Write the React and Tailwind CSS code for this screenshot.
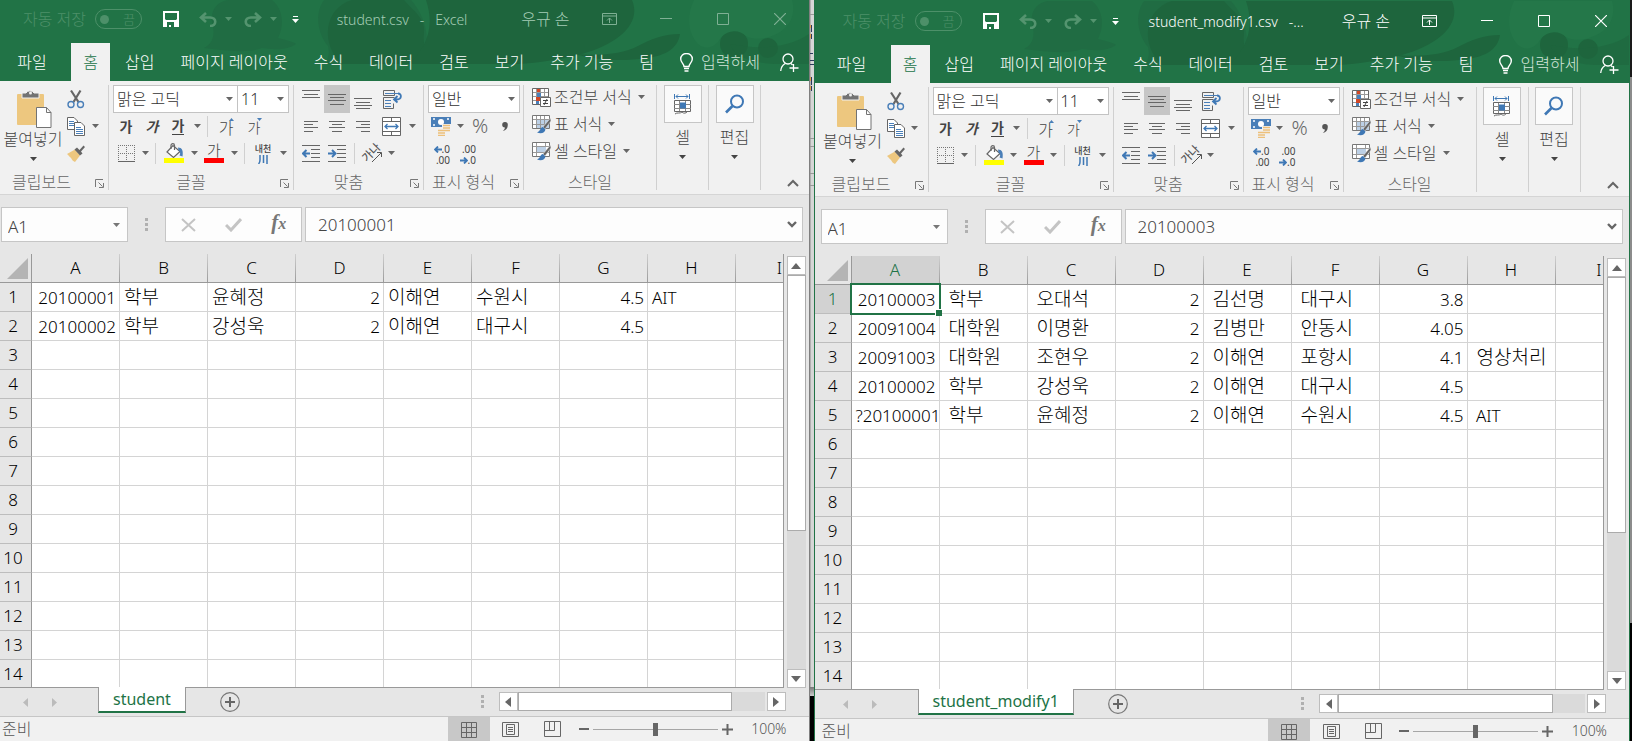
import React from "react";

const LEFT = {
  id: "left",
  title: "student.csv   -   Excel",
  active: false,
  cell: "20100001",
  sheet: "student",
  rows: [
    ["20100001", "학부", "윤혜정", "2", "이해연", "수원시", "4.5", "AIT"],
    ["20100002", "학부", "강성욱", "2", "이해연", "대구시", "4.5", ""],
  ],
};

const RIGHT = {
  id: "right",
  title: "student_modify1.csv   -...",
  active: true,
  cell: "20100003",
  sheet: "student_modify1",
  rows: [
    ["20100003", " 학부", " 오대석", "2", " 김선명", " 대구시", "3.8", ""],
    ["20091004", " 대학원", " 이명환", "2", " 김병만", " 안동시", "4.05", ""],
    ["20091003", " 대학원", " 조현우", "2", " 이해연", " 포항시", "4.1", " 영상처리"],
    ["20100002", " 학부", " 강성욱", "2", " 이해연", " 대구시", "4.5", ""],
    ["?20100001", " 학부", " 윤혜정", "2", " 이해연", " 수원시", "4.5", " AIT"],
  ],
};

const COLUMNS = ["A", "B", "C", "D", "E", "F", "G", "H", "I"];
const TABS = ["삽입", "페이지 레이아웃", "수식", "데이터", "검토", "보기", "추가 기능", "팀"];

/* ---------- small shared pieces ---------- */

function Caret({ className = "text-[#666]" }) {
  return (
    <svg width="7" height="4" viewBox="0 0 7 4" className={"shrink-0 " + className} aria-hidden="true">
      <path d="M0 0h7L3.5 4z" fill="currentColor" />
    </svg>
  );
}

function CaretButton({ label }) {
  return (
    <button aria-label={label} className="flex h-full w-3 items-center justify-center">
      <Caret />
    </button>
  );
}

function Btn({ label, w = "w-[26px]", className = "", children }) {
  return (
    <button aria-label={label} className={"flex h-full shrink-0 items-center justify-center " + w + " " + className}>
      {children}
    </button>
  );
}

function Sep() {
  return <span className="mx-1 h-[21px] w-px shrink-0 bg-[#d0d0d0]" />;
}

function Svg({ w, h, children, className = "" }) {
  return (
    <svg width={w} height={h} viewBox={`0 0 ${w} ${h}`} fill="none" className={"shrink-0 " + className} aria-hidden="true">
      {children}
    </svg>
  );
}

function Lines({ rows, w = 18, h = 27 }) {
  return (
    <Svg w={w} h={h}>
      {rows.map(([y, x1, x2]) => (
        <path key={y} d={`M${x1} ${y + 0.5}H${x2}`} stroke="#666" />
      ))}
    </Svg>
  );
}

/* ---------- header ---------- */

function HeaderArt() {
  return (
    <svg className="absolute right-0 top-0 h-16 w-[645px]" viewBox="0 0 645 64" preserveAspectRatio="xMaxYMin slice" aria-hidden="true">
      <g fill="#206c43">
        <path d="M40 48c12-6 10-18 8-26C46 8 56 0 66 0h42c12 10 12 26 6 38 8 2 16 4 18 6-8 6-22 6-34 4-16 6-40 2-58 0z" />
        <path d="M160 0c-10 14-6 34 4 46 2 8 0 14-4 18h95c14-18 8-46-8-64z" />
      </g>
      <g fill="#1e653d">
        <path d="M188 0c-28 8-32 44-10 64h100c-14-4-20-16-18-32C262 18 246 8 240 0z" />
        <path d="M262 0h206c10 24-14 44-50 54-44 12-96 12-122 10h-50c14-16 26-34 16-64z" />
        <path d="M410 54c28 2 48 0 64-8 12-6 24-12 42-12-2 14-14 22-34 24-24 4-50 2-72-4z" />
        <circle cx="570" cy="44" r="14" />
        <circle cx="604" cy="48" r="10" />
        <path d="M566 44c6 14 20 18 44 20h35V34c-20 14-50 16-79 10z" opacity="0.6" />
      </g>
      <path d="M530 0c-8 16-6 34 4 44 8 6 14 4 20-2 6-12 20-14 28-6 10 6 34 2 44-14 4-8 4-16 2-22z" fill="#247749" />
    </svg>
  );
}

function TitleBar({ win }) {
  const on = win.active ? "text-white" : "text-[#7fb094]";
  const name = win.active ? "text-white" : "text-[#a5cdb6]";
  return (
    <div className="relative mb-[5px] flex h-[38px] items-center pl-[28px] text-[16px]">
      <span className="w-[64px] shrink-0 whitespace-nowrap text-[#4d9069]">자동 저장</span>
      <button
        aria-label="자동 저장"
        className="ml-2 mr-[21px] flex h-5 w-[47px] shrink-0 items-center justify-between rounded-full border border-[#4d9069] pl-1 pr-1.5 text-[13px] leading-none text-[#4d9069]"
      >
        <span className="h-[9px] w-[9px] rounded-full bg-[#4d9069]" />끔
      </button>
      <button aria-label="저장" className="mr-5">
        <Svg w={16} h={16}>
          <path fillRule="evenodd" fill="#fff" d="M0 0h16v16H0zM2 2v6l1 1h10l1-1V2zM4 11v5h1v-0h1v-2h2v2h3v-5z" />
        </Svg>
      </button>
      <button aria-label="실행 취소" className="mr-2">
        <Svg w={18} h={15}>
          <path d="M7 1 2 5.500l5 4.500M2.500 5.500H11c7 0 7 8.500 0 8.500" stroke="#54946f" strokeWidth="2.600" />
        </Svg>
      </button>
      <Caret className="mr-3 text-[#54946f]" />
      <button aria-label="다시 실행" className="mr-2">
        <Svg w={18} h={15}>
          <path d="m11 1 5 4.500-5 4.500M15.500 5.500H7c-7 0-7 8.500 0 8.500" stroke="#54946f" strokeWidth="2.600" />
        </Svg>
      </button>
      <Caret className="mr-[15px] text-[#54946f]" />
      <button aria-label="빠른 실행 도구 모음 사용자 지정">
        <Svg w={7} h={7}>
          <path d="M1 .5h5" stroke="#fff" />
          <path d="M0 3h7L3.500 7z" fill="#fff" />
        </Svg>
      </button>
      <h1 className={"min-w-0 flex-1 whitespace-pre text-center text-[14px] " + (win.active ? "pr-2 " : "pr-4 ") + name}>{win.title}</h1>
      <span className={"mr-[11px] whitespace-nowrap " + name}>우규 손</span>
      <div className={"flex shrink-0 " + on}>
        <button aria-label="리본 메뉴 표시 옵션" className="flex w-[57px] justify-center">
          <Svg w={15} h={12}>
            <path d="M.5.5h14v11H.5zM.5 3h14M7.500 10V5M5 7.500 7.500 5 10 7.500" stroke="currentColor" />
          </Svg>
        </button>
        <button aria-label="최소화" className="flex w-[57px] items-center justify-center">
          <Svg w={12} h={12}>
            <path d="M0 5.500h12" stroke="currentColor" />
          </Svg>
        </button>
        <button aria-label="최대화" className="flex w-[57px] items-center justify-center">
          <Svg w={12} h={12}>
            <path d="M.5.5h11v11H.5z" stroke="currentColor" />
          </Svg>
        </button>
        <button aria-label="닫기" className="flex w-[57px] items-center justify-center">
          <Svg w={12} h={12}>
            <path d="m0 0 12 12M12 0 0 12" stroke="currentColor" strokeWidth="1.200" />
          </Svg>
        </button>
      </div>
    </div>
  );
}

function TabRow() {
  return (
    <nav className="relative flex h-[38px] items-stretch whitespace-nowrap text-[16px] text-white">
      <button className="w-[76px] shrink-0 pr-0.5">파일</button>
      <button className="mr-0.5 w-[39px] shrink-0 bg-[#f1f1f1] text-[#217346]">홈</button>
      {TABS.map((t) => (
        <button key={t} className="shrink-0 px-[13px]">
          {t}
        </button>
      ))}
      <button className="ml-[13px] flex items-center gap-2 text-[#d3e5da]">
        <Svg w={13} h={19}>
          <path
            d="M4 13.500c0-3-3.300-4-3.300-7.500a5.800 5.500 0 0 1 11.600 0c0 3.500-3.300 4.500-3.300 7.500zM4 15.500h5M4.500 18h4"
            stroke="#fff"
            strokeWidth="1.400"
          />
        </Svg>
        입력하세
      </button>
      <span className="flex-1" />
      <button aria-label="공유" className="mr-2.5">
        <Svg w={19} h={19}>
          <circle cx="8" cy="6" r="5" stroke="#fff" strokeWidth="1.300" />
          <path d="M.7 18c.3-4 2-6 4.500-7.500M11 10.500l1.500 1.500M13.500 11v8M9.500 15h9" stroke="#fff" strokeWidth="1.300" />
        </Svg>
      </button>
    </nav>
  );
}

/* ---------- ribbon ---------- */

function Group({ w, caption, launcher = true, children }) {
  return (
    <section className={"flex shrink-0 flex-col pt-1 " + w} aria-label={caption}>
      <div className="h-[84px]">{children}</div>
      <div className="flex h-[25px] items-center text-[16px] text-[#666]">
        <span className="flex-1 whitespace-nowrap text-center">{caption}</span>
        {launcher && (
          <button aria-label={caption + " 설정"} className="mr-1 mt-1 flex w-4 justify-end">
            <Svg w={9} h={9}>
              <path d="M.5 8V.5H8" stroke="#777" />
              <path d="m3.500 3.500 4 4M8.500 4v4.500H4" stroke="#777" />
            </Svg>
          </button>
        )}
      </div>
    </section>
  );
}

function GroupRule() {
  return <span className="mb-1 mt-1 w-px shrink-0 bg-[#d0d0d0]" />;
}

function Combo({ label, value, w, className = "" }) {
  return (
    <label className={"relative block h-7 border border-[#c3c3c3] bg-white " + w + " " + className}>
      <span className="sr-only">{label}</span>
      <select defaultValue={value} className="block h-full w-full appearance-none bg-transparent pl-[3px] text-[16px] leading-[26px] text-[#333] outline-none">
        <option>{value}</option>
      </select>
      <span className="pointer-events-none absolute inset-y-0 right-1 flex items-center">
        <Caret />
      </span>
    </label>
  );
}

function Clipboard() {
  return (
    <Group w="w-[113px]" caption="클립보드">
      <div className="flex">
        <button className="flex w-[68px] shrink-0 flex-col items-center pl-2 text-[16px] leading-5 text-[#444]">
          <Svg w={36} h={40} className="ml-0.5 mt-1">
            <rect x="1" y="5" width="27" height="31" rx="1" fill="#edc77f" />
            <path d="M6 9V4h4a4.500 4 0 0 1 8 0h5v5z" fill="#737373" stroke="#f1f1f1" />
            <circle cx="14.500" cy="4" r="1.500" fill="#f1f1f1" />
            <path d="M20.500 18.500h10l4.500 5v15h-14.500z" fill="#fff" stroke="#737373" />
            <path d="M30.500 18.500v5h4.500" stroke="#737373" />
          </Svg>
          <span className="whitespace-nowrap">붙여넣기</span>
          <Caret className="mt-2" />
        </button>
        <div className="flex flex-col">
          <div className="flex h-7 items-center">
            <Btn label="잘라내기">
              <Svg w={18} h={20}>
                <path d="M4 1.500 11.500 13M13.500 1.500 6.500 13" stroke="#666" strokeWidth="2.200" />
                <circle cx="4" cy="15.500" r="3" stroke="#4a7fb8" strokeWidth="1.400" />
                <circle cx="13.500" cy="15.500" r="3" stroke="#4a7fb8" strokeWidth="1.400" />
              </Svg>
            </Btn>
          </div>
          <div className="flex h-[26px] items-center">
            <Btn label="복사">
              <Svg w={18} h={19}>
                <path d="M.5.5H7L10.500 4v8.500H.5z" fill="#fff" stroke="#666" />
                <path d="M2 4.500h5M2 6.500h5M2 8.500h5" stroke="#4a7fb8" />
                <path d="M7.500 5.500H14L17.500 9v9.500h-10z" fill="#fff" stroke="#666" />
                <path d="M9 10.500h5M9 12.500h7M9 14.500h7M9 16.500h7" stroke="#4a7fb8" />
              </Svg>
            </Btn>
            <CaretButton label="복사 옵션" />
          </div>
          <div className="flex h-7 items-center">
            <Btn label="서식 복사">
              <Svg w={18} h={17}>
                <path d="m0 9 8-4.500 5 6L8 17c-2-1-3-2-4-4-1-1-2-2-4-4z" fill="#edc77f" />
                <path d="m7.500 4.500 2.500-2 2.500 2.500L16.500.5 18 2l-4 4.500 1.500 2-2.500 2z" fill="#666" />
              </Svg>
            </Btn>
          </div>
        </div>
      </div>
    </Group>
  );
}

function FontGroup() {
  return (
    <Group w="w-[184px]" caption="글꼴">
      <div className="flex pl-1">
        <Combo label="글꼴" value="맑은 고딕" w="w-[125px]" />
        <Combo label="글꼴 크기" value="11" w="w-[52px]" className="-ml-px" />
      </div>
      <div className="flex h-[26px] items-center pl-1 text-[#444]">
        <Btn label="굵게" className="text-[14px] font-bold">가</Btn>
        <Btn label="기울임꼴" className="text-[14px] font-bold italic">가</Btn>
        <Btn label="밑줄" className="text-[14px] font-bold"><span className="border-b border-[#444] leading-4">가</span></Btn>
        <CaretButton label="밑줄 종류" />
        <Sep />
        <Btn label="글꼴 크기 크게" w="w-[28px]" className="relative pt-1 text-[16px] leading-5">
          가
          <Svg w={5} h={3} className="absolute right-1.5 top-[5px]"><path d="M0 3h5L2.500 0z" fill="#4a7fb8" /></Svg>
        </Btn>
        <Btn label="글꼴 크기 작게" w="w-[28px]" className="relative pt-1 text-[14px] leading-5">
          가
          <Svg w={5} h={3} className="absolute right-1.5 top-[5px]"><path d="M0 0h5L2.500 3z" fill="#4a7fb8" /></Svg>
        </Btn>
      </div>
      <div className="flex h-7 items-center pl-1 text-[#444]">
        <Btn label="테두리">
          <Svg w={17} h={17}>
            <path d="M0 .5h17M0 8.500h17M.5 0v16M8.500 0v16M16.500 0v16" stroke="#777" strokeDasharray="1 1" />
            <path d="M0 16.500h17" stroke="#666" />
          </Svg>
        </Btn>
        <CaretButton label="테두리 종류" />
        <Sep />
        <Btn label="채우기 색" w="w-[28px]">
          <Svg w={20} h={20}>
            <path d="m3 9 6-6.500 7 6L9.500 14.500z" fill="#fff" stroke="#666" strokeWidth="1.200" />
            <path d="M7 6V2.500C7 0 10.500 0 10.500 2.500V7" stroke="#666" strokeWidth="1.200" />
            <path d="M14 4.500c4 0 5.500 3 4.500 9l-3-1c1-2 1-4-1-5z" fill="#4a7fb8" />
            <path d="M0 15h20v5H0z" fill="#ff0" />
          </Svg>
        </Btn>
        <CaretButton label="채우기 색 선택" />
        <Btn label="글꼴 색" w="w-[28px]" className="flex-col text-[15px] leading-[14px]">
          가
          <span className="mt-px h-[5px] w-5 bg-[#f00]" />
        </Btn>
        <CaretButton label="글꼴 색 선택" />
        <Sep />
        <Btn label="윗주 필드" w="w-[28px]" className="flex-col text-[9px] font-medium leading-[12px]">
          <span className="whitespace-nowrap">내천</span>
          <Svg w={10} h={9}>
            <path d="M2 0v5c0 2-.5 3-1.500 4M5.500 0v8M9 0v9" stroke="#3f78b5" strokeWidth="1.500" />
          </Svg>
        </Btn>
        <CaretButton label="윗주 옵션" />
      </div>
    </Group>
  );
}

function Indent({ flip = false }) {
  return (
    <Svg w={18} h={17}>
      <path d="M0 .5h18M9 4.500h9M9 8.500h9M9 12.500h9M0 16.500h18" stroke="#666" />
      <path d={flip ? "M0 8.500h7M4 5l3.500 3.500L4 12" : "M8 8.500H1M4.500 5 1 8.500 4.500 12"} stroke="#3f78b5" strokeWidth="2" />
    </Svg>
  );
}

function AlignGroup() {
  return (
    <Group w="w-[129px]" caption="맞춤">
      <div className="flex h-7 items-center pl-1">
        <Btn label="위쪽 맞춤"><Lines rows={[[4, 0, 18], [8, 2, 16], [11, 0, 18]]} /></Btn>
        <Btn label="가운데 맞춤" className="bg-[#c6c6c6]"><Lines rows={[[8, 0, 18], [11, 2, 16], [14, 0, 18], [18, 2, 16]]} /></Btn>
        <Btn label="아래쪽 맞춤"><Lines rows={[[12, 0, 18], [16, 2, 16], [19, 0, 18], [22, 2, 16]]} /></Btn>
        <Btn label="텍스트 줄 바꿈" w="w-[32px]">
          <Svg w={19} h={19}>
            <path d="M.5.500h11v5H.5zM11.500 7.500H.5v11h10v-5" stroke="#666" />
            <path d="M2 3.500h13M2 10.500h6M2 13.500h6M2 16.500h6" stroke="#4a7fb8" />
            <path d="M15 3.500c4 0 4 6-1 6h-2M14.500 6l-3.500 3.500 3.500 3" stroke="#3f78b5" strokeWidth="1.800" />
          </Svg>
        </Btn>
      </div>
      <div className="flex h-[26px] items-center pl-1">
        <Btn label="왼쪽 맞춤"><Lines h={13} w={14} rows={[[1, 0, 14], [4, 0, 9], [7, 0, 14], [11, 0, 9]]} /></Btn>
        <Btn label="중앙 맞춤"><Lines h={13} w={16} rows={[[1, 0, 16], [4, 3, 13], [7, 0, 16], [11, 3, 13]]} /></Btn>
        <Btn label="오른쪽 맞춤"><Lines h={13} w={14} rows={[[1, 0, 14], [4, 5, 14], [7, 0, 14], [11, 5, 14]]} /></Btn>
        <Btn label="병합하고 가운데 맞춤" w="w-[30px]">
          <Svg w={19} h={19}>
            <path d="M.5.5h18v18H.5z" fill="#fff" stroke="#666" />
            <path d="M1 4.500h17M1 14.500h17M9.500 1v3M9.500 15v3" stroke="#666" />
            <path d="M3 9.500h13M5.500 7 3 9.500 5.500 12M13.500 7 16 9.500 13.500 12" stroke="#3f78b5" strokeWidth="1.300" />
          </Svg>
        </Btn>
        <CaretButton label="병합 옵션" />
      </div>
      <div className="flex h-7 items-center pl-1">
        <Btn label="내어쓰기"><Indent /></Btn>
        <Btn label="들여쓰기"><Indent flip /></Btn>
        <Sep />
        <Btn label="방향" className="relative">
          <span className="-rotate-45 whitespace-nowrap pb-1 text-[11px] font-medium leading-none text-[#555]">가나</span>
          <Svg w={12} h={12} className="absolute bottom-1 right-0.5">
            <path d="M1 11 10 2M6 1.500h4.500V6" stroke="#555" />
          </Svg>
        </Btn>
        <CaretButton label="방향 옵션" />
      </div>
    </Group>
  );
}

function NumberGroup() {
  return (
    <Group w="w-[99px]" caption="표시 형식">
      <div className="pl-1">
        <Combo label="표시 형식" value="일반" w="w-[92px]" />
      </div>
      <div className="flex h-[26px] items-center pl-1 text-[#666]">
        <Btn label="회계 표시 형식">
          <Svg w={20} h={20}>
            <path d="M0 1h20v10H0z" fill="#4a7fb8" />
            <path d="M2 3h2M16 3h2M2 9h2" stroke="#fff" strokeWidth="1.500" />
            <circle cx="10" cy="6" r="3" fill="#fff" />
            <path d="M11 8h9v9h-4v3H6v-7h5z" fill="#f1f1f1" />
            <path d="M12 9.500h7M12 12h7M12 14.500h7M7 14.500h7M7 17h7M7 19.500h7" stroke="#edc07a" strokeWidth="1.600" />
          </Svg>
        </Btn>
        <CaretButton label="통화 기호 선택" />
        <Btn label="백분율" w="w-[28px]" className="text-[20px] leading-none">%</Btn>
        <Btn label="쉼표 스타일" w="w-[22px]">
          <Svg w={6} h={9}>
            <path d="M3 0a2.700 2.700 0 0 1 2.800 3C5.800 6 4 8.500.8 9c1.600-1.300 2.100-2.300 2.100-3.500A2.700 2.700 0 0 1 3 0z" fill="#555" />
          </Svg>
        </Btn>
      </div>
      <div className="flex h-7 items-center gap-1 pl-1 pt-1 text-[10px] font-normal leading-[11px] text-[#444]">
        <Btn label="자릿수 늘림" w="w-[22px]" className="flex-col !items-end">
          <span className="flex items-center">
            <Svg w={8} h={7}><path d="M8 3.500H1M4 .5 1 3.500l3 3" stroke="#3f78b5" strokeWidth="1.800" /></Svg>.0
          </span>
          <span>.00</span>
        </Btn>
        <Btn label="자릿수 줄임" w="w-[22px]" className="flex-col !items-end">
          <span>.00</span>
          <span className="flex items-center">
            <Svg w={8} h={7}><path d="M0 3.500h7M4 .5l3 3-3 3" stroke="#3f78b5" strokeWidth="1.800" /></Svg>.0
          </span>
        </Btn>
      </div>
    </Group>
  );
}

function Brush() {
  return (
    <>
      <path d="M18.500 3 11 12l2 2 6-8z" fill="#666" stroke="#f1f1f1" strokeWidth=".5" />
      <path d="M11 12c-3 0-2 4-6 5.500 4 1.500 8 .5 8.500-3z" fill="#3f78b5" />
    </>
  );
}

function StyleGroup() {
  const items = [
    [
      "조건부 서식",
      <Svg key="i" w={19} h={19}>
        <path d="M.5.5h16v16H.5z" fill="#fff" stroke="#666" />
        <path d="M1 4.500h15M1 8.500h15M1 12.500h15M4.500 1v15M8.500 1v15M12.500 1v15" stroke="#999" />
        <path d="M5 1h3v3H5zM4 9h4v4H4z" fill="#d24726" />
        <path d="M5 5h4v4H5zM4 13h3v3H4z" fill="#4a7fb8" />
        <path d="M8.500 9.500h10v9h-10z" fill="#fff" stroke="#666" />
        <path d="M11 12.500h5M11 15.500h5M15 11l-3 6" stroke="#444" />
      </Svg>,
    ],
    [
      "표 서식",
      <Svg key="i" w={19} h={19}>
        <path d="M.5.5h17v13H.5z" fill="#fff" stroke="#777" />
        <path d="M5 5h12v8H5z" fill="#bcd0e6" />
        <path d="M1 4.500h16M1 9.500h16M4.500 1v12M8.500 1v12M12.500 1v12" stroke="#999" />
        <Brush />
      </Svg>,
    ],
    [
      "셀 스타일",
      <Svg key="i" w={19} h={19}>
        <path d="M.5.5h17v14H.5z" fill="#fff" stroke="#777" />
        <path d="M5 5h9v6H5z" fill="#bcd0e6" />
        <path d="M1 4.500h16M1 10.500h16M4.500 1v13M13.500 1v3" stroke="#999" />
        <Brush />
      </Svg>,
    ],
  ];
  return (
    <Group w="w-[132px]" caption="스타일" launcher={false}>
      {items.map(([label, icon]) => (
        <button key={label} className="flex h-[27px] items-center whitespace-nowrap pb-[3px] pl-2 text-[16px] text-[#444]">
          {icon}
          <span className="ml-[3px] mr-1.5">{label}</span>
          <Caret />
        </button>
      ))}
    </Group>
  );
}

function BigButton({ label, children }) {
  return (
    <button className="flex w-[51px] shrink-0 flex-col items-center pt-1 text-[16px] text-[#444]">
      <span className="flex h-[38px] w-[38px] items-center justify-center border border-[#c6c6c6] bg-[#fafafa]">{children}</span>
      <span className="mt-0.5 whitespace-nowrap">{label}</span>
      <Caret className="mt-1.5" />
    </button>
  );
}

function Ribbon() {
  return (
    <div className="flex h-[114px] shrink-0 border-b border-[#d5d5d5] bg-[#f1f1f1]">
      <Clipboard />
      <GroupRule />
      <FontGroup />
      <GroupRule />
      <AlignGroup />
      <GroupRule />
      <NumberGroup />
      <GroupRule />
      <StyleGroup />
      <GroupRule />
      <BigButton label="셀">
        <Svg w={20} h={21}>
          <path d="M1.500 0v5M16.500 0v5M3 2.500h12M5 .5l-2 2 2 2M13 .5l2 2-2 2" stroke="#3f78b5" />
          <path d="M1.500 6.500h16v11h-16z" fill="#fff" stroke="#666" />
          <path d="M1 10.500h17M1 14.500h17M6.500 7v10M12.500 7v10" stroke="#888" />
          <path d="M7 8.500h6v6H7z" fill="#3f78b5" />
          <path d="M2 20c2-2 5 0 7-2 2 2 4 1 5 0" stroke="#666" />
        </Svg>
      </BigButton>
      <GroupRule />
      <BigButton label="편집">
        <Svg w={20} h={20}>
          <circle cx="12" cy="7.500" r="6" stroke="#3f78b5" strokeWidth="2" />
          <path d="m7.500 12-6.500 6.500" stroke="#3f78b5" strokeWidth="2.600" />
        </Svg>
      </BigButton>
      <GroupRule />
      <div className="flex flex-1 items-end justify-end pb-[7px] pr-[10px]">
        <button aria-label="리본 메뉴 축소">
          <Svg w={12} h={8}>
            <path d="m1 7 5-5 5 5" stroke="#666" strokeWidth="2" />
          </Svg>
        </button>
      </div>
    </div>
  );
}

/* ---------- formula bar and grid ---------- */

function Dots() {
  return (
    <span className="flex flex-col gap-0.5" aria-hidden="true">
      <i className="h-[3px] w-[3px] bg-[#b0b0b0]" />
      <i className="h-[3px] w-[3px] bg-[#b0b0b0]" />
      <i className="h-[3px] w-[3px] bg-[#b0b0b0]" />
    </span>
  );
}

function FormulaBar({ win }) {
  const box = "flex h-[35px] items-center border border-[#c6c6c6] bg-[#fdfdfd]";
  return (
    <div className="flex h-[59px] shrink-0 items-start bg-[#e6e6e6] pl-1.5 pr-1.5 pt-3">
      <div className={box + " w-[127px] shrink-0"}>
        <input aria-label="이름 상자" defaultValue="A1" className="min-w-0 flex-1 bg-transparent pl-1.5 pt-1 text-[17px] text-[#444] outline-none" />
        <button aria-label="이름 목록" className="mr-[7px]"><Caret className="text-[#777]" /></button>
      </div>
      <div className="flex h-[35px] w-[37px] shrink-0 items-center justify-center"><Dots /></div>
      <div className={box + " mr-[3px] w-[137px] shrink-0 justify-around"}>
        <button aria-label="취소">
          <Svg w={15} h={14}><path d="m1 1 13 12M14 1 1 13" stroke="#c4c4c4" strokeWidth="2" /></Svg>
        </button>
        <button aria-label="입력">
          <Svg w={17} h={14}><path d="m1 7 5 5L16 1" stroke="#c4c4c4" strokeWidth="3" /></Svg>
        </button>
        <button aria-label="함수 삽입" className="pb-1 font-['Liberation_Serif',serif] text-[21px] font-bold italic leading-none text-[#777]">
          f<span className="text-[16px]">x</span>
        </button>
      </div>
      <div className={box + " min-w-0 flex-1"}>
        <input
          aria-label="수식 입력줄"
          defaultValue={win.cell}
          className="min-w-0 flex-1 bg-transparent pl-3 text-[17px] text-[#444] outline-none"
        />
        <button aria-label="수식 입력줄 확장" className="mr-[5px]">
          <Svg w={10} h={7}><path d="m1 1 4 4 4-4" stroke="#666" strokeWidth="2.400" /></Svg>
        </button>
      </div>
    </div>
  );
}

function cellClass(text, c) {
  if (c === 3 || c === 6 || (c === 0 && /^\d+$/.test(text))) return "text-right text-[17px] pt-px";
  if (/[가-힣]/.test(text)) return "text-left text-[19px]";
  return "text-left text-[17px] pt-px";
}

function Sheet({ win }) {
  const colRule = "bg-[linear-gradient(#cfcfcf,#9b9b9b)]";
  const selHead = "bg-[#d2d2d2] text-[#217346]";
  return (
    <div className="min-w-0 flex-1 overflow-hidden border-b border-r border-[#999] bg-white">
      <table className="w-[829px] table-fixed border-separate border-spacing-0 text-black">
        <thead>
          <tr className="bg-[#e6e6e6] text-[17px]">
            <th className="h-[29px] w-[37px] border-b border-r border-[#999] p-0">
              <svg width="21" height="21" viewBox="0 0 21 21" className="ml-3" aria-hidden="true">
                <path d="M21 0v21H0z" fill="#b4b4b4" />
              </svg>
            </th>
            {COLUMNS.map((c, i) => (
              <th
                key={c}
                scope="col"
                className={"h-[29px] w-[88px] border-b border-[#999] p-0 font-light " + (win.active && i === 0 ? selHead : "")}
              >
                <div className="flex h-7 items-stretch">
                  <span className="flex flex-1 items-center justify-center">{c}</span>
                  <span className={"w-px " + colRule} />
                </div>
              </th>
            ))}
          </tr>
        </thead>
        <tbody>
          {Array.from({ length: 14 }, (_, r) => {
            const last = r === 13;
            const h = last ? "h-[27px]" : "h-[29px] border-b";
            const row = win.rows[r] || [];
            return (
              <tr key={r}>
                <th
                  scope="row"
                  className={
                    "border-r border-b-[#bdbdbd] border-r-[#999] p-0 text-center text-[17px] font-light leading-6 " +
                    h +
                    " " +
                    (win.active && r === 0 ? selHead : "bg-[#e6e6e6]")
                  }
                >
                  {r + 1}
                </th>
                {COLUMNS.map((c, i) => {
                  const text = row[i] || "";
                  const selected = win.active && r === 0 && i === 0;
                  return (
                    <td key={c} className={"border-r border-[#d4d4d4] p-0 " + h + (selected ? " relative" : "")}>
                      <div className={"h-[26px] overflow-hidden whitespace-pre pl-1 pr-[3px] leading-[26px] " + cellClass(text, i)}>{text}</div>
                      {selected && (
                        <>
                          <span className="absolute -bottom-[2px] -left-[2px] -right-[2px] -top-[2px] border-2 border-[#217346]" />
                          <span className="absolute -bottom-[3px] -right-[3px] h-[7px] w-[7px] border-l border-t border-white bg-[#217346]" />
                        </>
                      )}
                    </td>
                  );
                })}
              </tr>
            );
          })}
        </tbody>
      </table>
    </div>
  );
}

function Arrow({ dir }) {
  const d = { up: "M0 6h10L5 0z", down: "M0 0h10L5 6z", left: "M6 0v10L0 5z", right: "M0 0v10l6-5z" }[dir];
  const wide = dir === "up" || dir === "down";
  return (
    <Svg w={wide ? 10 : 6} h={wide ? 6 : 10}>
      <path d={d} fill="#666" />
    </Svg>
  );
}

function ScrollBtn({ dir, label }) {
  return (
    <button aria-label={label} className="flex h-[19px] w-[19px] shrink-0 items-center justify-center border border-[#bdbdbd] bg-white">
      <Arrow dir={dir} />
    </button>
  );
}

function VerticalScroll() {
  return (
    <div className="flex w-[19px] shrink-0 flex-col pt-0.5">
      <ScrollBtn dir="up" label="위로 스크롤" />
      <div className="flex flex-1 flex-col bg-[#dadada]">
        <div className="h-[65%] border border-[#ababab] bg-white" />
      </div>
      <ScrollBtn dir="down" label="아래로 스크롤" />
    </div>
  );
}

function SheetBar({ win }) {
  return (
    <div className="flex h-[29px] shrink-0 items-start border-b border-[#c6c6c6] bg-[#e6e6e6]">
      <div className="flex h-7 w-[103px] shrink-0 items-center gap-6 pl-7">
        <button aria-label="이전 시트"><Svg w={5} h={9}><path d="M5 0v9L0 4.500z" fill="#bbb" /></Svg></button>
        <button aria-label="다음 시트"><Svg w={5} h={9}><path d="M0 0v9l5-4.500z" fill="#bbb" /></Svg></button>
      </div>
      <button className="relative -mt-px h-[26px] shrink-0 border-x border-b-2 border-x-[#999] border-b-[#217346] bg-white px-[14px] text-[16px] font-normal leading-6 text-[#217346]">
        {win.sheet}
      </button>
      <button aria-label="새 시트" className="ml-[34px] mt-1">
        <Svg w={20} h={20}>
          <circle cx="10" cy="10" r="9.300" stroke="#777" strokeWidth="1.200" />
          <path d="M10 5v10M5 10h10" stroke="#666" strokeWidth="2" />
        </Svg>
      </button>
      <span className="flex-1" />
      <div className="mt-[7px]"><Dots /></div>
      <div className="ml-[15px] mr-[23px] mt-1 flex w-[287px]">
        <ScrollBtn dir="left" label="왼쪽으로 스크롤" />
        <div className="mr-0.5 flex flex-1 bg-[#dadada]">
          <div className="w-[87%] border border-[#ababab] bg-white" />
        </div>
        <ScrollBtn dir="right" label="오른쪽으로 스크롤" />
      </div>
    </div>
  );
}

function StatusBar() {
  return (
    <footer className="flex h-6 shrink-0 items-center bg-[#f1f1f1] pl-[7px] pr-[22px] text-[16px] leading-6 text-[#555]">
      <span>준비</span>
      <span className="flex-1" />
      <button aria-label="기본" className="flex h-6 w-[42px] items-center justify-center bg-[#c8c8c8] pt-0.5">
        <Svg w={16} h={16}>
          <path d="M.5.5h15v15H.5zM.5 5.500h15M.5 10.500h15M5.500.5v15M10.500.5v15" stroke="#666" />
        </Svg>
      </button>
      <button aria-label="페이지 레이아웃" className="flex h-6 w-[42px] items-center justify-center">
        <Svg w={17} h={15}>
          <path d="M.5.5h16v14H.5zM4.500 2.500h8v10h-8zM6 5.500h5M6 7.500h5M6 9.500h5" stroke="#666" />
        </Svg>
      </button>
      <button aria-label="페이지 나누기 미리 보기" className="flex h-6 w-[42px] items-center justify-center">
        <Svg w={17} h={16}>
          <path d="M.5.5h16v15H.5zM5.500.5v9M10.500.5v9M.5 9.500h10" stroke="#666" />
        </Svg>
      </button>
      <button aria-label="축소" className="ml-[5px] mr-1">
        <Svg w={10} h={10}><path d="M0 5h10" stroke="#666" strokeWidth="2" /></Svg>
      </button>
      <input
        type="range"
        aria-label="확대/축소"
        min="0"
        max="100"
        defaultValue="50"
        className="h-[13px] w-[125px] appearance-none bg-[linear-gradient(#a6a6a6,#a6a6a6)] bg-[length:100%_1px] bg-center bg-no-repeat [&::-webkit-slider-thumb]:h-[13px] [&::-webkit-slider-thumb]:w-[5px] [&::-webkit-slider-thumb]:appearance-none [&::-webkit-slider-thumb]:bg-[#666]"
      />
      <button aria-label="확대" className="ml-1">
        <Svg w={11} h={11}><path d="M0 5.500h11M5.500 0v11" stroke="#666" strokeWidth="2" /></Svg>
      </button>
      <span className="ml-[18px] w-[36px] text-right text-[14px]">100%</span>
    </footer>
  );
}

function ExcelWindow({ win }) {
  return (
    <div className="flex min-w-0 flex-1 flex-col">
      <header className={"relative shrink-0 bg-[#217346]" + (win.active ? " pt-px" : "")}>
        <HeaderArt />
        <TitleBar win={win} />
        <TabRow />
      </header>
      <Ribbon />
      <FormulaBar win={win} />
      <div className="flex shrink-0 gap-[3px] bg-[#e6e6e6] pr-[3px]">
        <Sheet win={win} />
        <VerticalScroll />
      </div>
      <SheetBar win={win} />
      <StatusBar />
    </div>
  );
}

function Backdrop() {
  return (
    <div className="flex w-1 shrink-0 flex-col" aria-hidden="true">
      <svg width="4" height="687" viewBox="0 0 4 687" className="shrink-0">
        <path d="M0 0h4v687H0z" fill="#d6d6d6" />
        <path d="M0 0h1v687H0z" fill="#b0b0b0" />
        <path d="M0 14.500h4M0 138.500h4M0 146.500h4M0 173.500h4M0 185.500h4" stroke="#999" />
        <path d="M0 25h2v3H0zM0 34h2v4H0zM0 77h2v4H0zM0 86h2v4H0z" fill="#e0a04a" />
        <path d="M1.500 25v7M1.500 34v5M1.500 77v8M1.500 86v5M0 53.500h3M0 60.500h4M0 64.500h4" stroke="#2b3a5c" />
      </svg>
      <div className="h-[9px] bg-[linear-gradient(#777,#ccc)]" />
      <div className="flex-1 bg-black" />
    </div>
  );
}

export default function App() {
  return (
    <main className="flex h-screen overflow-hidden bg-[#8c8c8c] font-['Noto_Sans','Noto_Sans_CJK_KR',sans-serif] font-light">
      <div className="flex min-w-0 flex-[810] overflow-hidden border-r border-[#7f7f7f]">
        <div className="-ml-[5px] flex min-w-0 flex-1">
          <ExcelWindow win={LEFT} />
        </div>
      </div>
      <Backdrop />
      <div className="flex min-w-0 flex-[816] border-x border-t border-[#217346]">
        <ExcelWindow win={RIGHT} />
      </div>
      <div className="flex w-0.5 shrink-0 flex-col" aria-hidden="true">
        <div className="h-[77px] bg-[#1a1a1a]" />
        <div className="h-[546px] bg-[#8c8c8c]" />
        <div className="flex-1 bg-black" />
      </div>
    </main>
  );
}
